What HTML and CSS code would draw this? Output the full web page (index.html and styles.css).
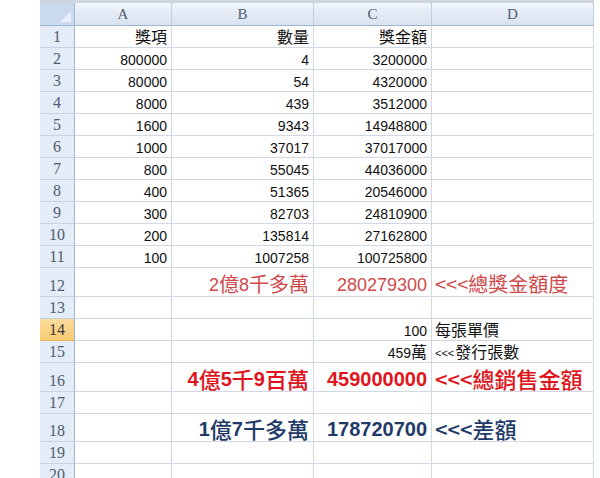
FILE: index.html
```html
<!DOCTYPE html>
<html lang="zh-Hant">
<head>
<meta charset="utf-8">
<title>獎金計算</title>
<link rel="stylesheet" href="styles.css">
</head>
<body>
<div class="sheet">
  <div class="corner"><span class="tri"></span></div>
  <div class="colhead">A</div>
  <div class="colhead">B</div>
  <div class="colhead">C</div>
  <div class="colhead">D</div>

  <div class="rowhead">1</div><div class="c r"><span class="zh">獎項</span></div><div class="c r"><span class="zh">數量</span></div><div class="c r"><span class="zh">獎金額</span></div><div class="c"></div>
  <div class="rowhead">2</div><div class="c r">800000</div><div class="c r">4</div><div class="c r">3200000</div><div class="c"></div>
  <div class="rowhead">3</div><div class="c r">80000</div><div class="c r">54</div><div class="c r">4320000</div><div class="c"></div>
  <div class="rowhead">4</div><div class="c r">8000</div><div class="c r">439</div><div class="c r">3512000</div><div class="c"></div>
  <div class="rowhead">5</div><div class="c r">1600</div><div class="c r">9343</div><div class="c r">14948800</div><div class="c"></div>
  <div class="rowhead">6</div><div class="c r">1000</div><div class="c r">37017</div><div class="c r">37017000</div><div class="c"></div>
  <div class="rowhead">7</div><div class="c r">800</div><div class="c r">55045</div><div class="c r">44036000</div><div class="c"></div>
  <div class="rowhead">8</div><div class="c r">400</div><div class="c r">51365</div><div class="c r">20546000</div><div class="c"></div>
  <div class="rowhead">9</div><div class="c r">300</div><div class="c r">82703</div><div class="c r">24810900</div><div class="c"></div>
  <div class="rowhead">10</div><div class="c r">200</div><div class="c r">135814</div><div class="c r">27162800</div><div class="c"></div>
  <div class="rowhead">11</div><div class="c r">100</div><div class="c r">1007258</div><div class="c r">100725800</div><div class="c"></div>

  <div class="rowhead">12</div><div class="c"></div><div class="c r big salmon">2<span class="zh">億</span>8<span class="zh">千多萬</span></div><div class="c r big salmon">280279300</div><div class="c big salmon"><span class="zh">&lt;&lt;&lt;總獎金額度</span></div>
  <div class="rowhead">13</div><div class="c"></div><div class="c"></div><div class="c"></div><div class="c"></div>
  <div class="rowhead sel">14</div><div class="c"></div><div class="c"></div><div class="c r">100</div><div class="c"><span class="zh">每張單價</span></div>
  <div class="rowhead">15</div><div class="c"></div><div class="c"></div><div class="c r">459<span class="zh">萬</span></div><div class="c"><span class="lt">&lt;&lt;&lt;</span><span class="zh">發行張數</span></div>
  <div class="rowhead">16</div><div class="c"></div><div class="c r bold red">4<span class="zh">億</span>5<span class="zh">千</span>9<span class="zh">百萬</span></div><div class="c r bold red">459000000</div><div class="c bold red"><span class="zh">&lt;&lt;&lt;總銷售金額</span></div>
  <div class="rowhead">17</div><div class="c"></div><div class="c"></div><div class="c"></div><div class="c"></div>
  <div class="rowhead">18</div><div class="c"></div><div class="c r bold navy">1<span class="zh">億</span>7<span class="zh">千多萬</span></div><div class="c r bold navy">178720700</div><div class="c bold navy"><span class="zh">&lt;&lt;&lt;差額</span></div>
  <div class="rowhead">19</div><div class="c"></div><div class="c"></div><div class="c"></div><div class="c"></div>
  <div class="rowhead">20</div><div class="c"></div><div class="c"></div><div class="c"></div><div class="c"></div>
</div>
</body>
</html>
```

FILE: styles.css
```css
html, body {
  margin: 0;
  padding: 0;
  background: #ffffff;
  overflow: hidden;
}

.sheet {
  margin-left: 40px;
  width: 554px;
  border-top: 3px solid #cdd5df;
  display: grid;
  grid-template-columns: 35px 97px 142px 118px 162px;
  grid-template-rows: 23px repeat(11, 22px) 29px 22px 22px 22px 29px 22px 28px 22px 22px;
  font-family: "Liberation Sans", "Noto Sans CJK TC", sans-serif;
  font-size: 14px;
  color: #111111;
}

.corner {
  background: #c9d9ee;
  border-right: 1px solid #9eb6ce;
  border-bottom: 1px solid #9eb6ce;
  display: flex;
  align-items: flex-end;
  justify-content: flex-end;
  padding: 0 3px 3px 0;
}

.tri {
  width: 0;
  height: 0;
  border-left: 11px solid transparent;
  border-bottom: 11px solid #e8eff8;
}

.colhead {
  background: linear-gradient(#f3f6fb 0%, #e4ebf5 45%, #d9e3f0 100%);
  border-right: 1px solid #c0cfe0;
  border-bottom: 1px solid #9eb6ce;
  display: flex;
  align-items: center;
  justify-content: center;
  font-family: "Liberation Serif", serif;
  font-size: 15px;
  color: #4e5d70;
}

.rowhead {
  background: #e4ecf7;
  border-right: 1px solid #9eb6ce;
  border-bottom: 1px solid #c5d3e3;
  display: flex;
  align-items: flex-end;
  justify-content: center;
  padding-bottom: 1px;
  font-family: "Liberation Serif", serif;
  font-size: 16px;
  line-height: 18px;
  color: #4e5d70;
}

.rowhead.sel {
  background: linear-gradient(#fbdb9c 0%, #f8cb73 100%);
  border-bottom-color: #e3b35c;
  color: #3a3a3a;
}

.c {
  border-right: 1px solid #d0d7e5;
  border-bottom: 1px solid #d0d7e5;
  display: flex;
  align-items: flex-end;
  justify-content: flex-start;
  padding: 0 3px 1px 3px;
  line-height: 16px;
  white-space: nowrap;
}

.c.r {
  justify-content: flex-end;
  padding-right: 4px;
}

.zh {
  font-family: "Noto Sans CJK TC", sans-serif;
  font-size: 16px;
  line-height: 19px;
}

.lt {
  font-size: 11px;
  margin-right: 1px;
}

.big {
  font-size: 18px;
  line-height: 22px;
  padding-bottom: 0;
}

.big .zh {
  font-size: 20px;
  line-height: 24px;
}

.bold {
  font-size: 20px;
  font-weight: bold;
  line-height: 24px;
  padding-bottom: 0;
}

.bold .zh {
  font-size: 22px;
  font-weight: 500;
  line-height: 26px;
}

.salmon { color: #d04a4c; }
.red { color: #e0141c; }
.navy { color: #1f3a68; }
```
